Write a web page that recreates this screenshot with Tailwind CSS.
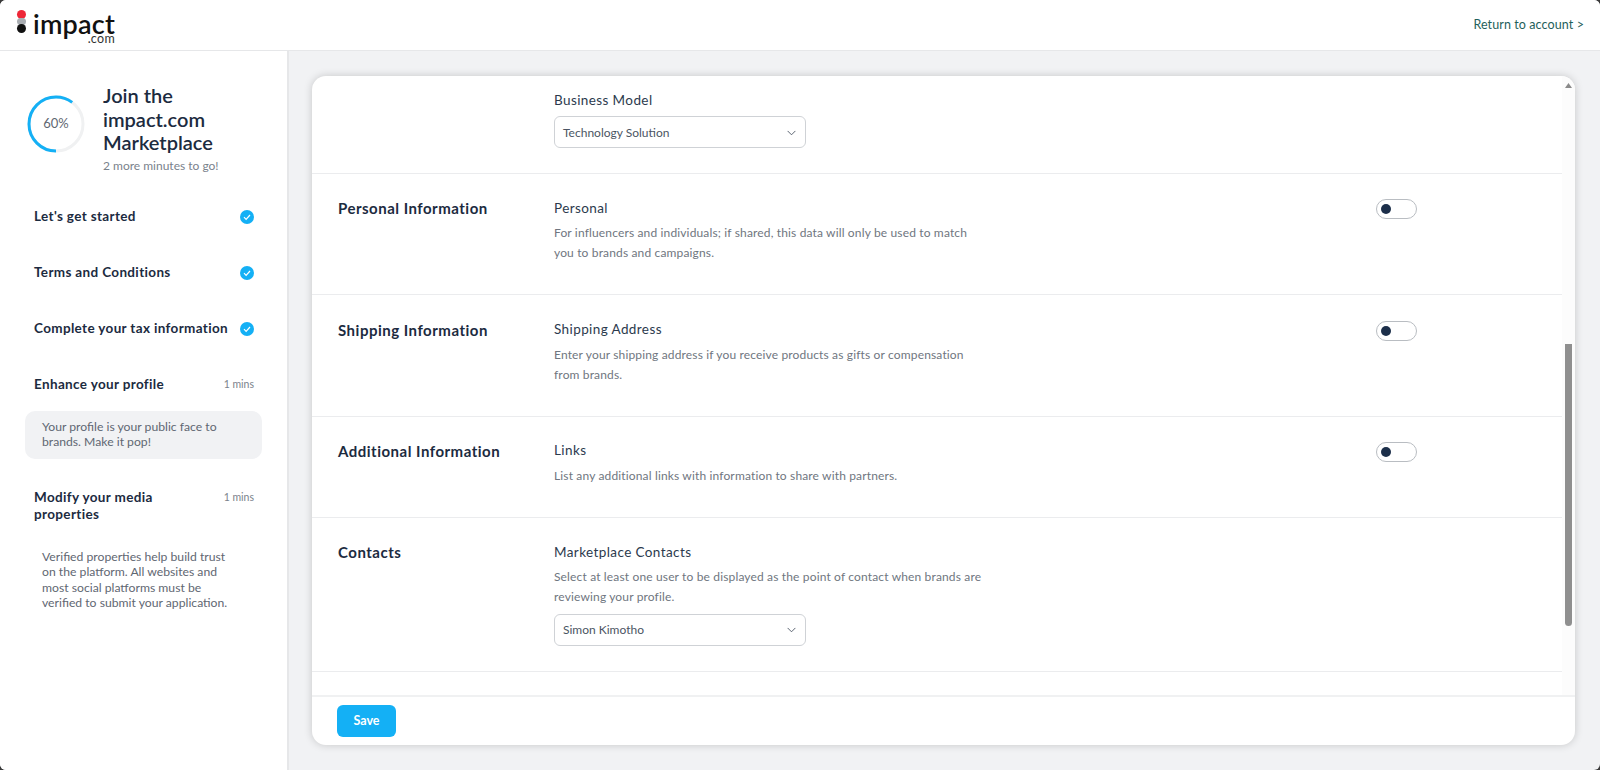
<!DOCTYPE html>
<html lang="en">
<head>
  <meta charset="UTF-8">
  <title>Join the impact.com Marketplace</title>
  <script src="https://cdn.jsdelivr.net/npm/@tailwindcss/browser@4"></script>
</head>
<body class="h-screen overflow-hidden bg-[#3a3a3a] font-['Lato',sans-serif] text-[#1c2b3f]">
  <div class="h-screen overflow-hidden rounded-[6px] bg-[#f1f2f4]">
  <header class="h-[51px] bg-white border-b border-[#e6e7e9] flex items-center justify-between pl-[16px] pr-[16px]">
    <div class="flex items-start h-[46px] pt-[8px]">
      <div class="flex flex-col items-center w-[10px]">
        <span class="w-[9px] h-[9px] rounded-full bg-[#ee2737]"></span>
        <span class="w-[9px] h-[7px] rounded-full bg-[#a9adb2] -mt-[1px]"></span>
        <span class="w-[9px] h-[9px] rounded-full bg-[#111] -mt-[1px]"></span>
      </div>
      <div class="ml-[7px] flex flex-col items-end w-[82px]">
        <span class="text-[27px] leading-[25px] mt-[1px] font-semibold tracking-[0.2px] text-[#111]">impact</span>
        <span class="text-[12.5px] leading-[10px] -mt-[2px] tracking-[0.3px] text-[#333]">.com</span>
      </div>
    </div>
    <a href="#" class="text-[12.5px] text-[#1f5f5b] tracking-[0.1px]">Return to account &gt;</a>
  </header>

  <div class="flex h-[719px]">
    <aside class="w-[289px] shrink-0 bg-white border-r-2 border-[#e6e7e9]">
      <div class="flex items-start pl-[27px] pt-[33px]">
        <div class="relative w-[58px] h-[58px] mt-[11px] shrink-0">
          <svg viewBox="0 0 58 58" class="w-[58px] h-[58px] rotate-90">
            <circle cx="29" cy="29" r="27" fill="none" stroke="#f0f1f2" stroke-width="3"></circle>
            <circle cx="29" cy="29" r="27" fill="none" stroke="#14b0f5" stroke-width="3" stroke-dasharray="101.8 169.6"></circle>
          </svg>
          <span class="absolute inset-0 flex items-center justify-center text-[13px] text-[#5f6772]">60%</span>
        </div>
        <div class="ml-[18px]">
          <h1 class="text-[20px] leading-[23.5px] font-semibold w-[130px]">Join the impact.com Marketplace</h1>
          <p class="text-[12px] leading-[20px] text-[#7a828c] mt-[1px]">2 more minutes to go!</p>
        </div>
      </div>

      <ul class="mt-[13px] text-[13.5px] font-bold tracking-[0.35px]">
        <li class="h-[56px] pl-[34px] pr-[33px] flex items-center justify-between">
          <span>Let's get started</span>
          <svg viewBox="0 0 14 14" class="w-[14px] h-[14px]"><circle cx="7" cy="7" r="7" fill="#14b0f5"></circle><path d="M4 7.2l2.1 2.1L10 5" fill="none" stroke="#fff" stroke-width="1.2"></path></svg>
        </li>
        <li class="h-[56px] pl-[34px] pr-[33px] flex items-center justify-between">
          <span>Terms and Conditions</span>
          <svg viewBox="0 0 14 14" class="w-[14px] h-[14px]"><circle cx="7" cy="7" r="7" fill="#14b0f5"></circle><path d="M4 7.2l2.1 2.1L10 5" fill="none" stroke="#fff" stroke-width="1.2"></path></svg>
        </li>
        <li class="h-[56px] pl-[34px] pr-[33px] flex items-center justify-between">
          <span>Complete your tax information</span>
          <svg viewBox="0 0 14 14" class="w-[14px] h-[14px]"><circle cx="7" cy="7" r="7" fill="#14b0f5"></circle><path d="M4 7.2l2.1 2.1L10 5" fill="none" stroke="#fff" stroke-width="1.2"></path></svg>
        </li>
        <li class="h-[56px] pl-[34px] pr-[33px] flex items-center justify-between">
          <span>Enhance your profile</span>
          <span class="text-[10.5px] font-normal tracking-normal text-[#7a828c]">1 mins</span>
        </li>
      </ul>

      <div class="mx-[25px] w-[237px] h-[48px] mt-[-2px] rounded-[10px] bg-[#f1f2f4] px-[17px] py-[8px] text-[12.2px] leading-[15.5px] text-[#5f6772]">
        Your profile is your public face to brands. Make it pop!
      </div>

      <div class="mt-[30px] pl-[34px] pr-[33px] flex items-start justify-between">
        <span class="text-[13.5px] leading-[17px] font-bold tracking-[0.35px] w-[160px]">Modify your media properties</span>
        <span class="text-[10.5px] leading-[17px] text-[#7a828c]">1 mins</span>
      </div>
      <p class="mt-[26px] ml-[42px] w-[205px] text-[12.2px] leading-[15.5px] text-[#5f6772]">
        Verified properties help build trust<br>on the platform. All websites and<br>most social platforms must be<br>verified to submit your application.
      </p>
    </aside>

    <main class="flex-1 pl-[23px] pr-[25px] pt-[25px] pb-[25px]">
      <div class="h-[669px] bg-white rounded-[14px] shadow-[0_0_8px_rgba(0,0,0,0.18)] overflow-hidden flex flex-col">
        <div class="h-[619px] flex overflow-hidden">
          <div class="flex-1">
            <section class="h-[98px] border-b border-[#ebecee] pl-[242px] pt-[15px]">
              <div class="text-[13.5px] leading-[18px] tracking-[0.4px] text-[#2b3a4d]">Business Model</div>
              <div class="mt-[7px] w-[252px] h-[32px] border border-[#cfd2d6] rounded-[6px] pl-[8px] pr-[9px] pt-[1px] flex items-center justify-between text-[12px] text-[#4b5563]">
                <span>Technology Solution</span>
                <svg viewBox="0 0 10 6" class="w-[9px] h-[6px]"><path d="M.7.7L5 5l4.3-4.3" fill="none" stroke="#4b5563" stroke-width="1"></path></svg>
              </div>
            </section>

            <section class="h-[121px] border-b border-[#ebecee] pl-[26px] pt-[25px] flex">
              <h2 class="w-[216px] text-[15px] leading-[20px] -mt-[1px] font-bold tracking-[0.5px]">Personal Information</h2>
              <div class="w-[430px]">
                <div class="text-[13.5px] leading-[18px] tracking-[0.4px] text-[#2b3a4d]">Personal</div>
                <p class="mt-[6px] text-[12px] leading-[20px] tracking-[0.15px] text-[#6f7680]">For influencers and individuals; if shared, this data will only be used to match you to brands and campaigns.</p>
              </div>
              <div class="ml-[392px] relative w-[41px] h-[20px] border border-[#b9bdc2] rounded-full">
                <span class="absolute left-[4px] top-[4px] w-[10px] h-[10px] rounded-full bg-[#1c2f4a]"></span>
              </div>
            </section>

            <section class="h-[122px] border-b border-[#ebecee] pl-[26px] pt-[25px] flex">
              <h2 class="w-[216px] text-[15px] leading-[20px] font-bold tracking-[0.5px]">Shipping Information</h2>
              <div class="w-[430px]">
                <div class="text-[13.5px] leading-[18px] tracking-[0.4px] text-[#2b3a4d]">Shipping Address</div>
                <p class="mt-[7px] text-[12px] leading-[20px] tracking-[0.15px] text-[#6f7680]">Enter your shipping address if you receive products as gifts or compensation from brands.</p>
              </div>
              <div class="ml-[392px] mt-[1px] relative w-[41px] h-[20px] border border-[#b9bdc2] rounded-full">
                <span class="absolute left-[4px] top-[4px] w-[10px] h-[10px] rounded-full bg-[#1c2f4a]"></span>
              </div>
            </section>

            <section class="h-[101px] border-b border-[#ebecee] pl-[26px] pt-[24px] flex">
              <h2 class="w-[216px] text-[15px] leading-[20px] font-bold tracking-[0.5px]">Additional Information</h2>
              <div class="w-[430px]">
                <div class="text-[13.5px] leading-[18px] tracking-[0.4px] text-[#2b3a4d]">Links</div>
                <p class="mt-[7px] text-[12px] leading-[20px] tracking-[0.15px] text-[#6f7680]">List any additional links with information to share with partners.</p>
              </div>
              <div class="ml-[392px] mt-[1px] relative w-[41px] h-[20px] border border-[#b9bdc2] rounded-full">
                <span class="absolute left-[4px] top-[4px] w-[10px] h-[10px] rounded-full bg-[#1c2f4a]"></span>
              </div>
            </section>

            <section class="h-[154px] border-b border-[#ebecee] pl-[26px] pt-[25px] flex">
              <h2 class="w-[216px] text-[15px] leading-[20px] -mt-[1px] font-bold tracking-[0.5px]">Contacts</h2>
              <div class="w-[430px]">
                <div class="text-[13.5px] leading-[18px] tracking-[0.4px] text-[#2b3a4d]">Marketplace Contacts</div>
                <p class="mt-[6px] text-[12px] leading-[20px] tracking-[0.15px] text-[#6f7680]">Select at least one user to be displayed as the point of contact when brands are reviewing your profile.</p>
                <div class="mt-[7px] w-[252px] h-[32px] border border-[#cfd2d6] rounded-[6px] pl-[8px] pr-[9px] flex items-center justify-between text-[12px] text-[#4b5563]">
                  <span>Simon Kimotho</span>
                  <svg viewBox="0 0 10 6" class="w-[9px] h-[6px]"><path d="M.7.7L5 5l4.3-4.3" fill="none" stroke="#4b5563" stroke-width="1"></path></svg>
                </div>
              </div>
            </section>
          </div>
          <div class="relative w-[13px] shrink-0 bg-[#fcfcfc]">
            <svg viewBox="0 0 7 5" class="absolute left-[3px] top-[7px] w-[7px] h-[5px]"><path d="M3.5 0L7 5H0z" fill="#8a8a8a"></path></svg>
            <div class="absolute left-[3px] top-[268px] w-[7px] h-[282px] rounded-b-[4px] bg-[#8f8f8f]"></div>
          </div>
        </div>
        <footer class="flex-1 border-t-2 border-[#f0f1f2] pl-[25px] pt-[8px]">
          <button class="w-[59px] h-[32px] rounded-[6px] bg-[#14b0f5] text-white text-[12.5px] font-bold">Save</button>
        </footer>
      </div>
    </main>
  </div>
  </div>
</body>
</html>
